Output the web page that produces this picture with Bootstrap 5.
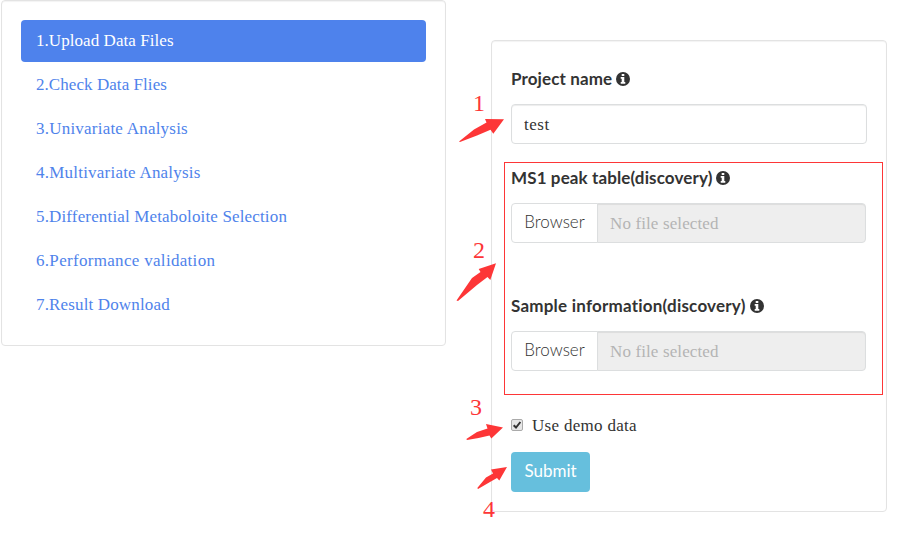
<!DOCTYPE html>
<html lang="en">
<head>
<meta charset="utf-8">
<title>Upload Data Files</title>
<link href="https://cdn.jsdelivr.net/npm/bootstrap@5.3.0/dist/css/bootstrap.min.css" rel="stylesheet">
<style>
body{height:549px;overflow:hidden;font-family:"Liberation Serif",serif;font-size:17px;line-height:24px;color:#333;background:#fff}
.panel{border:1px solid #e3e3e3;border-radius:4px;background:#fff;box-shadow:inset 0 1px 1px rgba(0,0,0,.05)}
.steps-panel{width:445px;height:346px;margin-left:1px;padding:19px}
.form-panel{width:396px;height:472px;margin:40px 0 0 45px;padding:26px 19px 19px}
.steps{gap:2px}
.steps .nav-link{height:42px;padding:9px 15px;color:#4f83eb;border-radius:4px;white-space:nowrap;letter-spacing:.15px}
.steps .nav-link.active{background:#4e82ec;color:#fff}
.steps .s1{letter-spacing:.06px}
.steps .s4{letter-spacing:.22px}
.steps .s6{letter-spacing:.31px}
.sans{font-family:Lato,sans-serif;font-size:17px}
.field-label{height:24px;margin:0 0 13px;font-weight:700;gap:4px;white-space:nowrap;letter-spacing:.12px}
.field-label.wide{letter-spacing:.22px}
.info{width:14px;height:14px}
.form-control{height:40px;padding:9px 12px 7px;border-color:#dcdedf;border-radius:4px;font-size:17px;line-height:24px;letter-spacing:.12px;color:#333;box-shadow:inset 0 1px 1px rgba(0,0,0,.075)}
.form-control.name-field{letter-spacing:.5px}
.picker{width:355px;height:40px}
.picker .btn{width:87px;padding:6px 0 8px;border-color:#dcdedf;border-radius:4px;color:#333;background:#fff;font-weight:300;line-height:24px}
.picker .form-control:disabled{background:#eee}
.picker .form-control::placeholder{color:#b4b4b4;opacity:1}
.group-two{margin-top:22px}
.group-three{margin-top:51px}
.demo{margin-top:42px;height:24px;gap:9px;letter-spacing:.3px}
.demo span{padding-top:2px}
.demo-box{appearance:none;width:12px;height:12px;margin:0;border:1px solid #aaa;border-radius:2px;background:#e6e6e6 url("data:image/svg+xml,%3Csvg xmlns='http://www.w3.org/2000/svg' viewBox='0 0 10 10'%3E%3Cpath d='M1.7 5.2 4 7.5 8.4 2' fill='none' stroke='%23333' stroke-width='2'/%3E%3C/svg%3E") center/10px no-repeat}
.submit-btn{width:79px;height:40px;margin-top:15px;padding:7px 0 9px;border:0;border-radius:4px;background:#66bfdd;color:#fff;line-height:24px}
.marks{position:absolute;left:0;top:0;pointer-events:none}
.marks text{font-family:"Liberation Serif",serif;font-size:24px;fill:#fd3637}
</style>
</head>
<body>
<main class="d-flex align-items-start">
<nav class="panel steps-panel flex-shrink-0">
<div class="nav nav-pills flex-column steps">
<a class="nav-link active s1" href="#">1.Upload Data Files</a>
<a class="nav-link s1" href="#">2.Check Data Flies</a>
<a class="nav-link s4" href="#">3.Univariate Analysis</a>
<a class="nav-link s4" href="#">4.Multivariate Analysis</a>
<a class="nav-link" href="#">5.Differential Metaboloite Selection</a>
<a class="nav-link s6" href="#">6.Performance validation</a>
<a class="nav-link" href="#">7.Result Download</a>
</div>
</nav>
<form class="panel form-panel flex-shrink-0">
<svg width="0" height="0" class="position-absolute"><defs><symbol id="info" viewBox="0 0 14 14"><circle cx="7" cy="7" r="7" fill="#333"/><path d="M5.700 2h2.600v2H5.700zM4.700 5.100h3.600V10h1v1.700H4.700V10h1V6.800h-1z" fill="#fff"/></symbol></defs></svg>
<label class="field-label sans d-flex align-items-center" for="project"><span>Project name</span><svg class="info"><use href="#info"/></svg></label>
<input id="project" class="form-control name-field" value="test">
<div class="group-two">
<label class="field-label sans d-flex align-items-center"><span>MS1 peak table(discovery)</span><svg class="info"><use href="#info"/></svg></label>
<div class="input-group picker"><button type="button" class="btn sans">Browser</button><input class="form-control" placeholder="No file selected" disabled></div>
</div>
<div class="group-three">
<label class="field-label wide sans d-flex align-items-center"><span>Sample information(discovery)</span><svg class="info"><use href="#info"/></svg></label>
<div class="input-group picker"><button type="button" class="btn sans">Browser</button><input class="form-control" placeholder="No file selected" disabled></div>
</div>
<label class="demo d-flex align-items-center"><input class="demo-box" type="checkbox" checked><span>Use demo data</span></label>
<button type="button" class="btn submit-btn sans d-block">Submit</button>
</form>
</main>
<svg class="marks" width="899" height="549" viewBox="0 0 899 549">
<rect x="504.500" y="162.500" width="378" height="232" fill="none" stroke="#fd3637"/>
<g fill="#fd3637">
<path d="M459 141.500 474 129.500 486.500 122.500 485 119 504 119.300 493.300 133.700 490.500 129.800 477 135.500 460 142z"/>
<path d="M456.500 300.500 472 278 480.500 272 478.700 269 496 263.300 490.300 280 487.500 277 477 285 458 301z"/>
<path d="M466.300 439 477 432 487.500 428.500 486 424 503 427.500 491.300 438.500 489.500 435.500 478.500 438 467 440z"/>
<path d="M477.300 488 486 477.500 493 473.500 491 469.500 507 467 499.300 480.500 497 478 490 482 478 489z"/>
</g>
<text x="473" y="111">1</text><text x="473" y="258">2</text><text x="470" y="415">3</text><text x="483" y="517">4</text>
</svg>
<script src="https://cdn.jsdelivr.net/npm/bootstrap@5.3.0/dist/js/bootstrap.bundle.min.js"></script>
</body>
</html>
